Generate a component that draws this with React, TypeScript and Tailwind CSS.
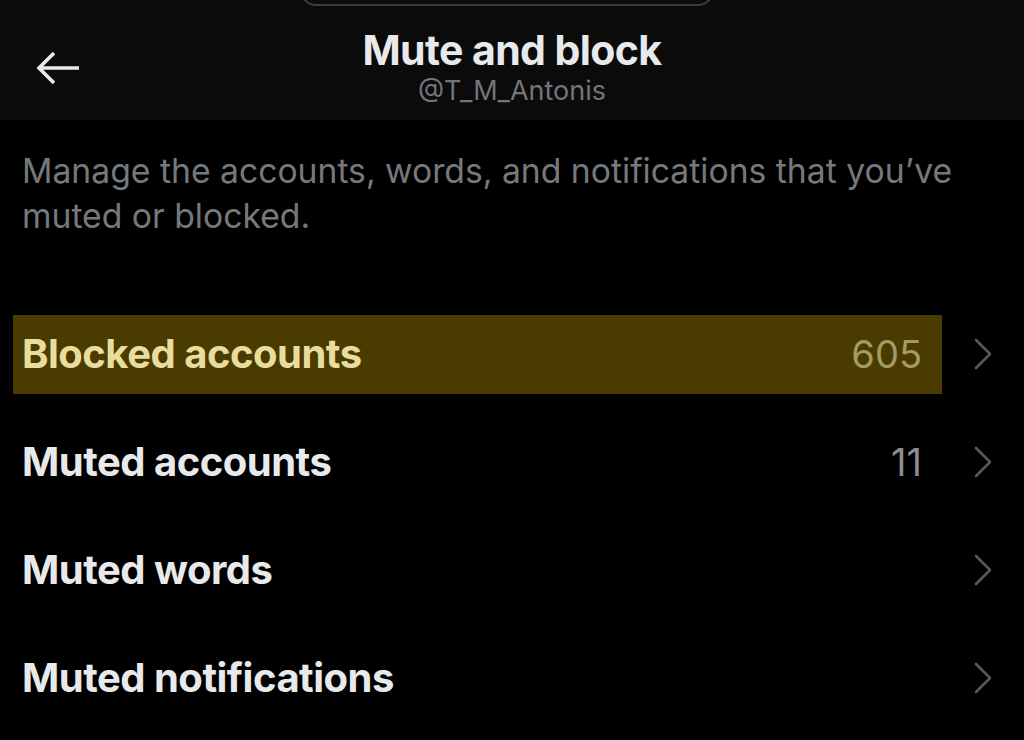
import React from "react";

const font = { fontFamily: "Inter, 'Noto Sans', Roboto, sans-serif" };

function Chevron() {
  return (
    <svg width="18" height="32" viewBox="0 0 18 32" fill="none" className="shrink-0">
      <path d="M2 2 L16 16 L2 30" stroke="#55585c" strokeWidth="2.6" strokeLinecap="round" strokeLinejoin="round" />
    </svg>
  );
}

function Row({ label, count, highlight }: { label: string; count?: string; highlight?: boolean }) {
  return (
    <div className="flex h-[108px] items-center pl-[13px]">
      <div
        className={
          "flex h-[79px] flex-1 items-center justify-between pl-[9px] pr-[20px] " +
          (highlight ? "bg-[#4a3c00]" : "")
        }
      >
        <span
          className={
            "text-[40px] font-bold tracking-[-0.5px] " + (highlight ? "text-[#e9dd9d]" : "text-[#e7e9ea]")
          }
        >
          {label}
        </span>
        {count && (
          <span className={"text-[38px] font-normal " + (highlight ? "text-[#a59a62]" : "text-[#8b8d90]")}>
            {count}
          </span>
        )}
      </div>
      <div className="flex w-[82px] shrink-0 justify-start pl-[32px]">
        <Chevron />
      </div>
    </div>
  );
}

export default function App() {
  return (
    <div className="h-[740px] w-[1024px] overflow-hidden bg-black" style={font}>
      <header className="relative flex h-[120px] flex-col items-center bg-[#0b0b0b] pt-[26px]">
        <div className="absolute left-[300px] top-[-40px] h-[46px] w-[414px] rounded-b-[16px] border-2 border-[#3c3c3c]" />
        <div className="absolute left-[36px] top-[50px]">
          <svg width="46" height="36" viewBox="0 0 46 36" fill="none">
            <path d="M4 18 H43 M18 3 L3 18 L18 33" stroke="#e7e9ea" strokeWidth="3.6" strokeLinecap="butt" strokeLinejoin="miter" />
          </svg>
        </div>
        <h1 className="text-[41px] leading-[48px] font-bold tracking-[-0.6px] text-[#e7e9ea]">Mute and block</h1>
        <div className="text-[27px] leading-[34px] text-[#71767b]">@T_M_Antonis</div>
      </header>
      <p className="px-[22px] pt-[28px] text-[33.7px] leading-[45px] text-[#76797c]">
        Manage the accounts, words, and notifications that you’ve muted or blocked.
      </p>
      <div className="mt-[62px]">
        <Row label="Blocked accounts" count="605" highlight />
        <Row label="Muted accounts" count="11" />
        <Row label="Muted words" />
        <Row label="Muted notifications" />
      </div>
    </div>
  );
}
